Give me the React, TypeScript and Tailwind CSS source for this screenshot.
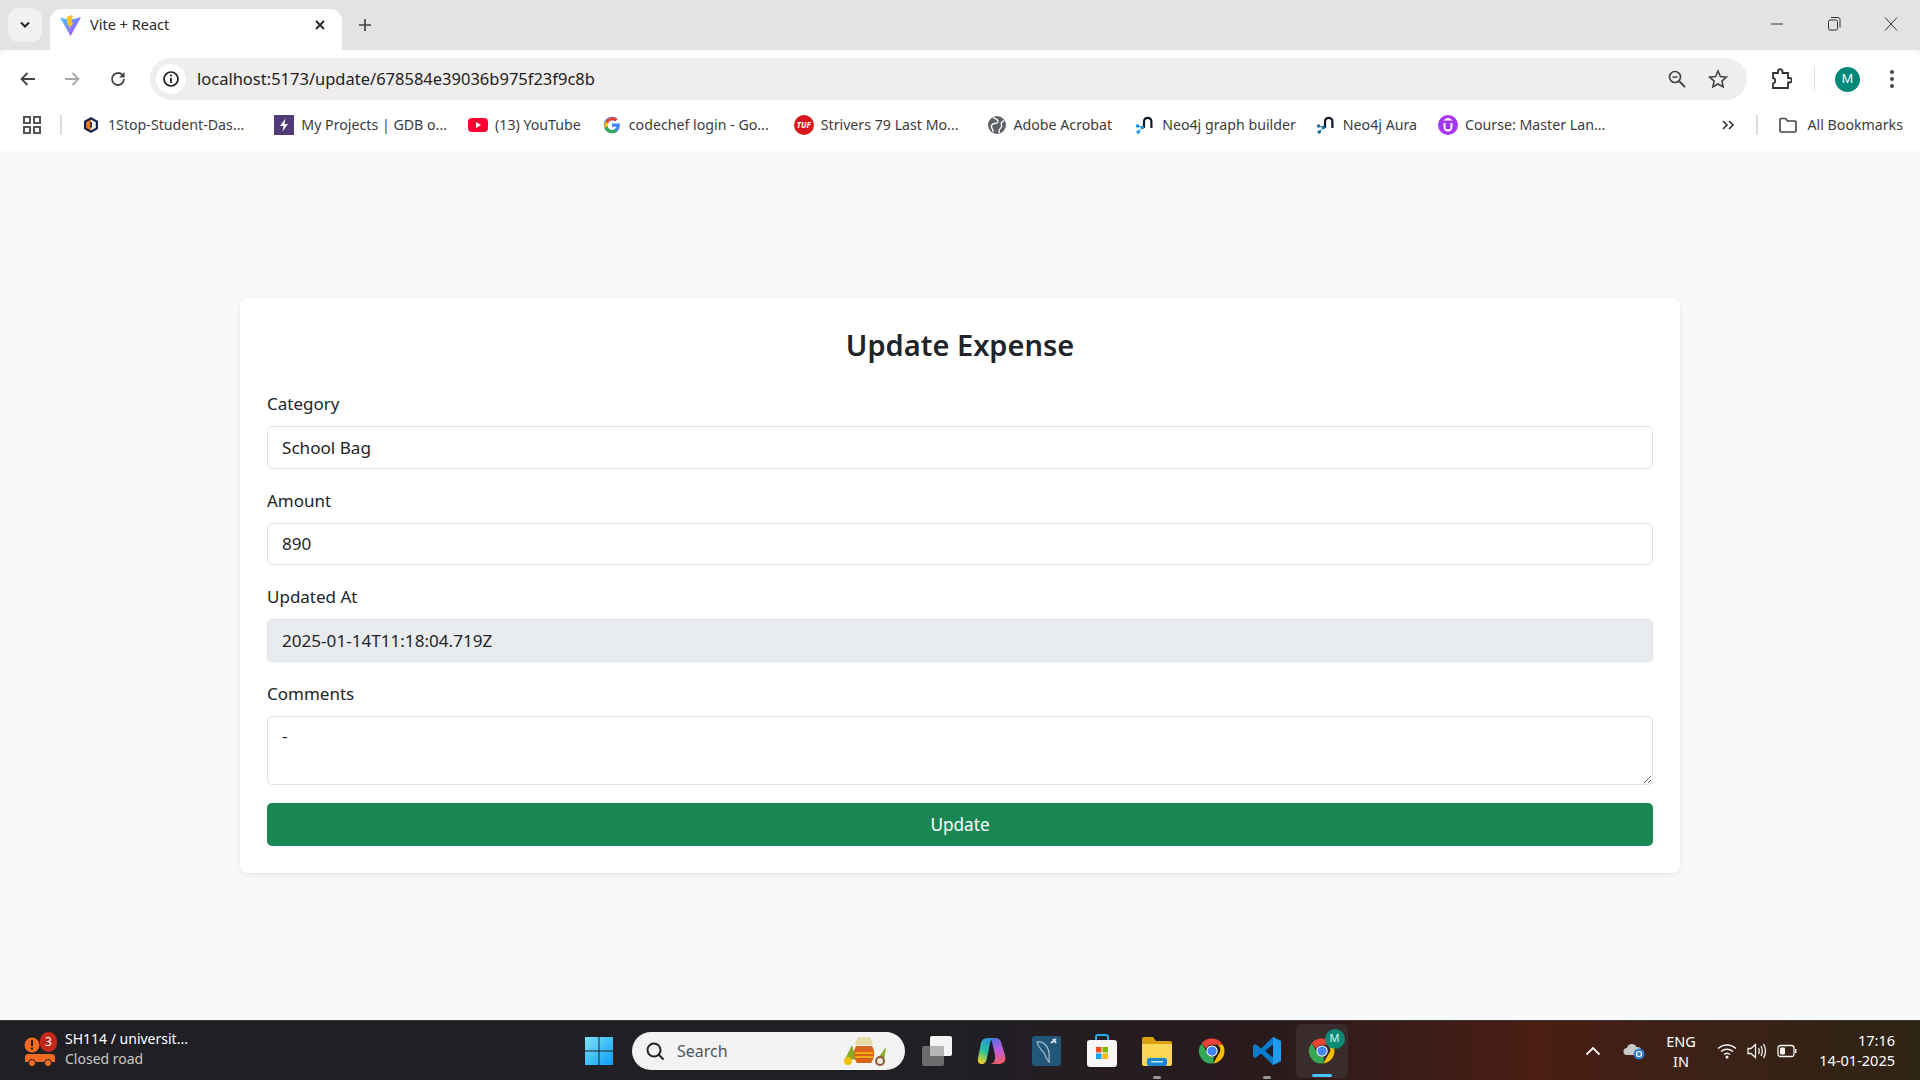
import React from 'react'

const font = { fontFamily: '"Noto Sans", "Open Sans", sans-serif' }

function ViteLogo() {
  return (
    <svg width="23" height="23" viewBox="0 0 24 24">
      <defs>
        <linearGradient id="viteA" x1="0" y1="0" x2="1" y2="1">
          <stop offset="0%" stopColor="#41d1ff" />
          <stop offset="100%" stopColor="#bd34fe" />
        </linearGradient>
      </defs>
      <path d="M1 3.500 L12 23 L23 3.500 L16 5 L12 6 L6 5 Z" fill="url(#viteA)" />
      <path d="M13 1 L8 3 L9 12 L11 11.500 L10.500 16 L15 8.500 L13 9 L14.500 2 Z" fill="#ffc517" />
    </svg>
  )
}

function ChromeLogo({ size = 30 }: { size?: number }) {
  return (
    <svg width={size} height={size} viewBox="0 0 48 48">
      <path d="M24 4a20 20 0 0 1 17.300 10H24a10 10 0 0 0-9.300 6.300L7.600 11.500A20 20 0 0 1 24 4z" fill="#ea4335" />
      <path d="M41.300 14A20 20 0 0 1 26 43.900l8.400-14.600A10 10 0 0 0 33 14z" fill="#fbbc04" />
      <path d="M7.600 11.500l8.700 15.100A10 10 0 0 0 27 33.500L26 43.900A20 20 0 0 1 7.600 11.500z" fill="#34a853" />
      <circle cx="24" cy="24" r="9" fill="#fff" />
      <circle cx="24" cy="24" r="7.400" fill="#4285f4" />
    </svg>
  )
}

function Neo4jIcon({ dark = '#111827', dot = '#1a8fe3' }: { dark?: string; dot?: string }) {
  return (
    <svg width="20" height="20" viewBox="0 0 20 20">
      <path d="M9 13V6.500a3.700 3.700 0 0 1 7.400 0V13" fill="none" stroke={dark} strokeWidth="2.200" />
      <circle cx="2.600" cy="11" r="1.800" fill={dot} />
      <circle cx="7.500" cy="12.500" r="1.800" fill={dot} />
      <circle cx="3.200" cy="17" r="1.800" fill={dot} />
      <path d="M2.600 11 7.500 12.500 3.200 17" fill="none" stroke={dot} strokeWidth="1" />
    </svg>
  )
}

const bookmarks: { label: string; gap: string; icon: React.ReactNode }[] = [
  {
    label: '1Stop-Student-Das...',
    gap: 'mr-[30px]',
    icon: (
      <svg width="18" height="18" viewBox="0 0 18 18">
        <path d="M9 1l7 4v8l-7 4-7-4V5z" fill="#14234f" />
        <path d="M9 3.500l4.800 2.800v5.400L9 14.500z" fill="#f0f0f0" />
        <path d="M9 3.500L4.200 6.300v5.400L9 14.500z" fill="#ee7a1e" />
        <rect x="8.200" y="6" width="1.700" height="5.600" fill="#14234f" />
      </svg>
    ),
  },
  {
    label: 'My Projects | GDB o...',
    gap: 'mr-[21px]',
    icon: (
      <svg width="20" height="20" viewBox="0 0 20 20">
        <rect width="20" height="20" fill="#503a78" />
        <path d="M11.500 3.500 6 11h3.600L8.400 16.500 14 9h-3.600z" fill="#fff" />
      </svg>
    ),
  },
  {
    label: '(13) YouTube',
    gap: 'mr-[21px]',
    icon: (
      <svg width="20" height="20" viewBox="0 0 20 20">
        <rect y="3" width="20" height="14" rx="4" fill="#ff0033" />
        <path d="M8 7l5 3-5 3z" fill="#fff" />
      </svg>
    ),
  },
  {
    label: 'codechef login - Go...',
    gap: 'mr-[25px]',
    icon: (
      <svg width="18" height="18" viewBox="0 0 48 48">
        <path d="M44.500 20H24v8.500h11.800C34.700 33.900 30.100 37 24 37a13 13 0 1 1 0-26c3.300 0 6.200 1.200 8.500 3.200l6.400-6.400A22 22 0 1 0 24 46c11 0 21-8 21-22 0-1.300-.2-2.700-.5-4z" fill="#4285f4" />
        <path d="M6.300 14.700l7 5.100A13 13 0 0 1 24 11c3.300 0 6.200 1.200 8.500 3.200l6.400-6.400A22 22 0 0 0 6.300 14.700z" fill="#ea4335" />
        <path d="M24 46c5.900 0 11-2 14.800-5.400l-6.800-5.600A13 13 0 0 1 11.400 27.500l-7 5.400A22 22 0 0 0 24 46z" fill="#34a853" />
        <path d="M6.300 14.700A22 22 0 0 0 4.400 32.900l7-5.400a13 13 0 0 1 1.900-7.700z" fill="#fbbc04" />
      </svg>
    ),
  },
  {
    label: 'Strivers 79 Last Mo...',
    gap: 'mr-[28px]',
    icon: (
      <span className="flex h-[20px] w-[20px] items-center justify-center rounded-full bg-[#d9161e] text-[8px] font-bold italic text-white">
        TUF
      </span>
    ),
  },
  {
    label: 'Adobe Acrobat',
    gap: 'mr-[23px]',
    icon: (
      <svg width="20" height="20" viewBox="0 0 20 20">
        <circle cx="10" cy="10" r="9" fill="#5f6368" />
        <path d="M6 2.500c2 1 4.500 1.500 5 3.500s-2 2.500-3.500 2.500S4 10 4.500 12s2 3 1.500 5M17 6c-2 .5-3.500 2-2.500 4s-1 3-2 4.500-.5 2.500 0 3.500" fill="none" stroke="#fff" strokeWidth="1.300" />
      </svg>
    ),
  },
  { label: 'Neo4j graph builder', gap: 'mr-[20px]', icon: <Neo4jIcon /> },
  { label: 'Neo4j Aura', gap: 'mr-[21px]', icon: <Neo4jIcon dot="#1a6f9e" /> },
  {
    label: 'Course: Master Lan...',
    gap: 'mr-[0px]',
    icon: (
      <span className="flex h-[20px] w-[20px] items-center justify-center rounded-full bg-[#a435f0]">
        <svg width="12" height="16" viewBox="0 0 12 16">
          <path d="M6 0.500 11 3.500H1z" fill="#fff" />
          <path d="M2.500 6v4a3.500 3.500 0 0 0 7 0V6" fill="none" stroke="#fff" strokeWidth="2" />
        </svg>
      </span>
    ),
  },
]

function TabStrip() {
  return (
    <div className="flex h-[50px] items-end bg-[#e3e3e3]">
      <div className="mb-[8px] ml-[8px] flex h-[34px] w-[34px] items-center justify-center rounded-[10px] bg-[#f1f1f1]">
        <svg width="12" height="8" viewBox="0 0 12 8">
          <path d="M2 1.500l4 4 4-4" fill="none" stroke="#222" strokeWidth="2" />
        </svg>
      </div>
      <div className="ml-[8px] flex h-[41px] w-[292px] items-center rounded-t-[12px] bg-white pb-[9px] pl-[9px] pr-[16px]">
        <ViteLogo />
        <span className="ml-[8px] flex-1 text-[14.5px] text-[#2a2a2a]">Vite + React</span>
        <svg width="12" height="12" viewBox="0 0 12 12">
          <path d="M2 2l8 8M10 2l-8 8" stroke="#222" strokeWidth="1.800" />
        </svg>
      </div>
      <div className="mb-[15px] ml-[13px] flex h-[20px] w-[20px] items-center justify-center">
        <svg width="14" height="14" viewBox="0 0 14 14">
          <path d="M7 1v12M1 7h12" stroke="#444" strokeWidth="1.700" />
        </svg>
      </div>
      <div className="mb-[2px] ml-auto flex h-[48px] items-center gap-[37px] pr-[19px]">
        <svg width="20" height="20" viewBox="0 0 20 20">
          <path d="M4 10h12" stroke="#333" strokeWidth="1" />
        </svg>
        <svg width="20" height="20" viewBox="0 0 20 20">
          <rect x="4.500" y="6" width="9" height="10" rx="1.500" fill="none" stroke="#333" />
          <path d="M7 3.500h7a2 2 0 0 1 2 2v8" fill="none" stroke="#333" />
        </svg>
        <svg width="20" height="20" viewBox="0 0 20 20">
          <path d="M4 3.500l12 13M16 3.500l-12 13" stroke="#333" strokeWidth="1" />
        </svg>
      </div>
    </div>
  )
}

function Toolbar() {
  return (
    <div className="flex h-[51px] items-center rounded-t-[10px] bg-white pt-[7px]">
      <div className="flex w-[150px] items-center pl-[18px]">
        <svg width="20" height="20" viewBox="0 0 20 20">
          <path d="M17 10H4M9.500 4 3.500 10l6 6" fill="none" stroke="#444" strokeWidth="1.800" />
        </svg>
        <svg className="ml-[24px]" width="20" height="20" viewBox="0 0 20 20">
          <path d="M3 10h13M10.500 4l6 6-6 6" fill="none" stroke="#a8a8a8" strokeWidth="1.800" />
        </svg>
        <svg className="ml-[26px]" width="20" height="20" viewBox="0 0 20 20">
          <path d="M16 10a6 6 0 1 1-1.800-4.300L16 7.500" fill="none" stroke="#444" strokeWidth="1.800" />
          <path d="M16.500 3v5.500H11z" fill="#444" />
        </svg>
      </div>
      <div className="flex h-[42px] w-[1597px] items-center rounded-full bg-[#efedee] pl-[6px] pr-[19px]">
        <span className="flex h-[30px] w-[30px] items-center justify-center rounded-full bg-white">
          <svg width="18" height="18" viewBox="0 0 18 18">
            <circle cx="9" cy="9" r="7" fill="none" stroke="#222" strokeWidth="1.700" />
            <path d="M9 8v5" stroke="#222" strokeWidth="1.800" />
            <circle cx="9" cy="5.500" r="1.100" fill="#222" />
          </svg>
        </span>
        <span className="ml-[11px] flex-1 text-[16.5px] text-[#222]">localhost:5173/update/678584e39036b975f23f9c8b</span>
        <svg width="20" height="20" viewBox="0 0 20 20">
          <circle cx="8" cy="8" r="5.500" fill="none" stroke="#444" strokeWidth="1.700" />
          <path d="M12 12l6 6" stroke="#444" strokeWidth="1.800" />
          <path d="M5.500 8h5" stroke="#444" strokeWidth="1.500" />
        </svg>
        <svg className="ml-[21px]" width="20" height="20" viewBox="0 0 20 20">
          <path d="M10 2l2.400 5.500 6 .6-4.500 4 1.300 5.900L10 15l-5.200 3 1.300-5.900-4.500-4 6-.6z" fill="none" stroke="#444" strokeWidth="1.600" />
        </svg>
      </div>
      <svg className="ml-[23px]" width="22" height="22" viewBox="0 0 22 22">
        <path d="M3 5h5V3.500a2.200 2.200 0 0 1 4.500 0V5H18v5h1.500a2 2 0 0 1 0 4.500H18V20H3v-4.500a2.300 2.300 0 0 0 2-3 2.300 2.300 0 0 0-2-2.500z" fill="none" stroke="#333" strokeWidth="1.800" />
      </svg>
      <div className="ml-[22px] h-[24px] w-[1px] bg-[#e0e0e0]" />
      <div className="ml-[20px] flex h-[25px] w-[25px] items-center justify-center rounded-full bg-[#00897b] text-[13px] text-white">
        M
      </div>
      <div className="ml-[30px] flex flex-col gap-[3px]">
        <span className="h-[4px] w-[4px] rounded-full bg-[#444]" />
        <span className="h-[4px] w-[4px] rounded-full bg-[#444]" />
        <span className="h-[4px] w-[4px] rounded-full bg-[#444]" />
      </div>
    </div>
  )
}

function BookmarksBar() {
  return (
    <div className="flex h-[50px] items-center bg-white pb-[2px] text-[14.2px] text-[#3c3c3c]">
      <div className="flex items-center pl-[22px]">
        <svg width="20" height="20" viewBox="0 0 20 20">
          <g fill="none" stroke="#555" strokeWidth="2">
            <rect x="2" y="2" width="6" height="6" />
            <rect x="12" y="2" width="6" height="6" />
            <rect x="2" y="12" width="6" height="6" />
            <rect x="12" y="12" width="6" height="6" />
          </g>
        </svg>
        <div className="ml-[18px] h-[20px] w-[2px] bg-[#dcdcdc]" />
      </div>
      <div className="ml-[19px] flex items-center">
        {bookmarks.map((b) => (
          <div key={b.label} className={`flex items-center gap-[7px] whitespace-nowrap ${b.gap}`}>
            <span className="flex h-[20px] w-[20px] items-center justify-center">{b.icon}</span>
            <span>{b.label}</span>
          </div>
        ))}
      </div>
      <div className="ml-auto flex items-center pr-[17px]">
        <svg width="16" height="14" viewBox="0 0 16 14">
          <path d="M3 3l4 4-4 4M9 3l4 4-4 4" fill="none" stroke="#333" strokeWidth="1.600" />
        </svg>
        <div className="mx-[20px] h-[20px] w-[2px] bg-[#dcdcdc]" />
        <svg width="20" height="18" viewBox="0 0 20 18">
          <path d="M2 3.500a1 1 0 0 1 1-1h4.500l2 2.500H17a1 1 0 0 1 1 1V15a1 1 0 0 1-1 1H3a1 1 0 0 1-1-1z" fill="none" stroke="#444" strokeWidth="1.600" />
        </svg>
        <span className="ml-[10px]">All Bookmarks</span>
      </div>
    </div>
  )
}

function Field({ label, value, disabled }: { label: string; value: string; disabled?: boolean }) {
  return (
    <div className="mb-[19px]">
      <label className="mb-[11px] block h-[24px] text-[17px] leading-[26px] text-[#212529]">{label}</label>
      <input
        readOnly
        value={value}
        disabled={disabled}
        className={
          disabled
            ? 'block h-[42.5px] w-full rounded-[5px] border border-[#dee2e6] bg-[#e9ecef] px-[14px] text-[17.1px] text-[#212529] outline-none'
            : 'block h-[42.5px] w-full rounded-[5px] border border-[#dee2e6] bg-white px-[14px] text-[17.1px] text-[#212529] outline-none'
        }
      />
    </div>
  )
}

function UpdateForm() {
  return (
    <div className="mx-auto mt-[147px] w-[1440px] rounded-[8px] bg-white px-[27px] pb-[27px] pt-[25px] shadow-[0_2px_6px_rgba(0,0,0,0.08)]">
      <h2 className="mb-[24px] text-center text-[29px] font-semibold leading-[44px] text-[#212529]">Update Expense</h2>
      <Field label="Category" value="School Bag" />
      <Field label="Amount" value="890" />
      <Field label="Updated At" value="2025-01-14T11:18:04.719Z" disabled />
      <div className="mb-[18px]">
        <label className="mb-[11px] block h-[24px] text-[17px] leading-[26px] text-[#212529]">Comments</label>
        <textarea
          readOnly
          defaultValue="-"
          className="block h-[69px] w-full rounded-[5px] border border-[#dee2e6] bg-white px-[14px] py-[6px] text-[17.1px] text-[#212529] outline-none"
        />
      </div>
      <button className="block h-[43px] w-full rounded-[5px] bg-[#198754] pt-[1px] text-[17.2px] text-white">Update</button>
    </div>
  )
}

function Taskbar() {
  return (
    <div className="flex h-[60px] items-center border-t border-[#3a3638] bg-[linear-gradient(90deg,#201f24_0%,#201f24_50%,#2a1a1c_66%,#4a1e14_80%,#3a2216_90%,#2e2414_100%)] text-white">
      <div className="flex w-[584px] items-center pl-[24px]">
        <div className="relative h-[40px] w-[40px]">
          <svg className="absolute left-0 top-[2px]" width="34" height="36" viewBox="0 0 34 36">
            <circle cx="8" cy="12" r="7.500" fill="#f26a21" />
            <rect x="7" y="7" width="2" height="6" fill="#2a1a14" />
            <rect x="7" y="14.500" width="2" height="2" fill="#2a1a14" />
            <path d="M1 24q0-3 3-3h24q3 0 3 3v5H1z" fill="#f26a21" />
            <circle cx="8" cy="30" r="3.500" fill="#f26a21" stroke="#1f2027" />
            <circle cx="24" cy="30" r="3.500" fill="#f26a21" stroke="#1f2027" />
          </svg>
          <span className="absolute left-[16px] top-[1px] flex h-[20px] w-[17px] items-center justify-center rounded-full bg-[#c4281c] text-[12px]">
            3
          </span>
        </div>
        <div className="ml-[1px] mb-[4px] text-[14px] leading-[20px]">
          <div>SH114 / universit...</div>
          <div className="text-[#c9c9c9]">Closed road</div>
        </div>
      </div>
      <svg width="30" height="30" viewBox="0 0 30 30">
        <defs>
          <linearGradient id="winA" x1="0" y1="0" x2="1" y2="1">
            <stop offset="0%" stopColor="#7de3fb" />
            <stop offset="100%" stopColor="#0a9cf5" />
          </linearGradient>
        </defs>
        <path d="M1 1h13.500v13.500H1zM15.500 1H29v13.500H15.500zM1 15.500h13.500V29H1zM15.500 15.500H29V29H15.500z" fill="url(#winA)" />
      </svg>
      <div className="ml-[18px] flex h-[38px] w-[273px] items-center rounded-full bg-[#f3f3f3] pl-[13px] pr-[15px] text-[#555]">
        <svg width="20" height="20" viewBox="0 0 20 20">
          <circle cx="9" cy="9" r="6.500" fill="none" stroke="#222" strokeWidth="2" />
          <path d="M13.500 13.500l5 5" stroke="#222" strokeWidth="2" />
        </svg>
        <span className="ml-[12px] flex-1 text-[16px]">Search</span>
        <svg width="50" height="32" viewBox="0 0 50 32">
          <path d="M4 26l8-16 4 14z" fill="#8aa82a" />
          <path d="M36 26l10-14-2 14z" fill="#8aa82a" />
          <circle cx="8" cy="26" r="4" fill="#f4c20d" />
          <path d="M18 2h12l3 8H15z" fill="#ead9a8" />
          <path d="M16 11h16q5 8-1 17H17q-6-9-1-17z" fill="#d9621a" />
          <path d="M15 18h18M15 22h18" stroke="#f4c20d" strokeWidth="1.500" />
          <circle cx="40" cy="26" r="5" fill="#8a5a3c" />
          <circle cx="40" cy="26" r="3" fill="#efe6d8" />
        </svg>
      </div>
      <div className="ml-[4px] flex items-center">
        <div className="flex h-[48px] w-[55px] items-center justify-center">
          <div className="relative h-[30px] w-[30px]">
            <div className="absolute bottom-0 left-0 h-[20px] w-[22px] rounded-[2px] bg-[#6b6b6b]" />
            <div className="absolute right-0 top-0 h-[20px] w-[22px] rounded-[2px] bg-[#f4f4f4]" />
            <div className="absolute bottom-[10px] left-[8px] h-[10px] w-[14px] bg-[#b5b5b5]" />
          </div>
        </div>
        <div className="flex h-[48px] w-[55px] items-center justify-center">
          <svg width="30" height="32" viewBox="0 0 30 32">
            <defs>
              <linearGradient id="copA" x1="0.700" y1="0" x2="0.300" y2="1">
                <stop offset="0%" stopColor="#2f8fe0" />
                <stop offset="55%" stopColor="#25c2a0" />
                <stop offset="100%" stopColor="#f5d020" />
              </linearGradient>
              <linearGradient id="copB" x1="0.400" y1="0" x2="0.600" y2="1">
                <stop offset="0%" stopColor="#5a6fe8" />
                <stop offset="50%" stopColor="#c45cd8" />
                <stop offset="100%" stopColor="#f0605c" />
              </linearGradient>
            </defs>
            <path d="M18 3q5 0 6 4l4 13q2 8-5 9h-9q5-2 4-9l-3-13q-1-4 3-4z" fill="url(#copB)" />
            <path d="M11 3h7q-4 1-5 5l-3 15q-1 6-5 6-5 0-4-6l3-15q1-5 7-5z" fill="url(#copA)" />
          </svg>
        </div>
        <div className="flex h-[48px] w-[55px] items-center justify-center">
          <svg width="29" height="30" viewBox="0 0 29 30">
            <rect width="29" height="30" rx="3" fill="#22577a" />
            <path d="M5 6c5-1 9 2 11 7s1 10 1 13c-3-3-3-6-5-9s-6-5-7-11z" fill="none" stroke="#a9bfce" strokeWidth="1.200" />
            <path d="M19 7l5-4M21 3l3 4" stroke="#d5dfe6" strokeWidth="1.800" />
          </svg>
        </div>
        <div className="flex h-[48px] w-[55px] items-center justify-center">
          <svg width="30" height="34" viewBox="0 0 30 34">
            <path d="M9 7V3q0-2 2-2h8q2 0 2 2v4" fill="none" stroke="#29a8ea" strokeWidth="2" />
            <rect y="6" width="30" height="27" rx="3" fill="#f7f7f7" />
            <rect x="9" y="13" width="5.500" height="5.500" fill="#f25022" />
            <rect x="15.500" y="13" width="5.500" height="5.500" fill="#7fba00" />
            <rect x="9" y="19.500" width="5.500" height="5.500" fill="#00a4ef" />
            <rect x="15.500" y="19.500" width="5.500" height="5.500" fill="#ffb900" />
          </svg>
        </div>
        <div className="relative flex h-[48px] w-[55px] items-center justify-center">
          <svg width="30" height="30" viewBox="0 0 30 30">
            <path d="M0 3q0-2 2-2h9l3 4h14q2 0 2 2v3H0z" fill="#d9a012" />
            <path d="M0 8h30v20q0 2-2 2H2q-2 0-2-2z" fill="#fcd757" />
            <rect x="5" y="22" width="20" height="8" rx="2" fill="#1a86d0" />
            <rect x="9" y="25" width="12" height="1.500" fill="#bfe3f7" />
          </svg>
          <span className="absolute bottom-[-4px] h-[3px] w-[8px] rounded-full bg-[#9a9a9a]" />
        </div>
        <div className="flex h-[48px] w-[55px] items-center justify-center">
          <ChromeLogo />
        </div>
        <div className="relative flex h-[48px] w-[55px] items-center justify-center">
          <svg width="30" height="30" viewBox="0 0 30 30">
            <path d="M21 1l8 4v20l-8 4L9 17.500 3.500 22 1 20.500v-11L3.500 8 9 12.500z" fill="#0a7ccc" />
            <path d="M21 8.500 13 15l8 6.500z" fill="#1f2027" />
            <path d="M21 1l8 4v20l-8 4z" fill="#1f9cf0" />
          </svg>
          <span className="absolute bottom-[-4px] h-[3px] w-[8px] rounded-full bg-[#9a9a9a]" />
        </div>
        <div className="relative ml-[1.5px] flex h-[54px] w-[52px] items-center justify-center rounded-[5px] bg-[#3a2c2c]">
          <ChromeLogo />
          <span className="absolute right-[3px] top-[5px] flex h-[20px] w-[20px] items-center justify-center rounded-full bg-[#0f8a76] text-[11px] text-[#cfe]">
            M
          </span>
          <span className="absolute bottom-[1px] h-[3px] w-[20px] rounded-full bg-[#4cc2ff]" />
        </div>
      </div>
      <div className="ml-auto flex items-center pr-[25px]">
        <svg width="16" height="10" viewBox="0 0 16 10">
          <path d="M1.500 8.500 8 2l6.500 6.500" fill="none" stroke="#f2f2f2" strokeWidth="1.800" />
        </svg>
        <svg className="ml-[22px]" width="22" height="18" viewBox="0 0 22 18">
          <path d="M4 13a3.500 3.500 0 0 1 0-7 5 5 0 0 1 9.500-1A4 4 0 0 1 15 13z" fill="#c9c9c9" />
          <circle cx="16" cy="12" r="5.500" fill="#2f80d8" />
          <circle cx="16" cy="12" r="2.500" fill="none" stroke="#fff" strokeWidth="1.200" />
        </svg>
        <div className="ml-[16px] w-[40px] text-center text-[14.5px] leading-[20px]">
          <div>ENG</div>
          <div>IN</div>
        </div>
        <svg className="ml-[16px]" width="20" height="16" viewBox="0 0 20 16">
          <path d="M1 5.500a13 13 0 0 1 18 0M4 8.500a9 9 0 0 1 12 0M7 11.500a4.500 4.500 0 0 1 6 0" fill="none" stroke="#f2f2f2" strokeWidth="1.500" />
          <circle cx="10" cy="14" r="1.500" fill="#f2f2f2" />
        </svg>
        <svg className="ml-[10px]" width="20" height="18" viewBox="0 0 20 18">
          <path d="M1 6.500h3L8.500 2.500v13L4 11.500H1z" fill="none" stroke="#f2f2f2" strokeWidth="1.300" />
          <path d="M11.500 6q1.500 3 0 6M14 4q2.500 5 0 10M16.500 2q4 7 0 14" fill="none" stroke="#f2f2f2" strokeWidth="1.300" />
        </svg>
        <svg className="ml-[10px]" width="20" height="14" viewBox="0 0 20 14">
          <rect x="1" y="1.500" width="16" height="11" rx="2.500" fill="none" stroke="#f2f2f2" strokeWidth="1.300" />
          <rect x="3" y="3.500" width="5" height="7" rx="1" fill="#f2f2f2" />
          <rect x="18" y="5" width="1.500" height="4" fill="#f2f2f2" />
        </svg>
        <div className="ml-[20px] mb-[2px] w-[78px] text-right text-[14.5px] leading-[20px]">
          <div>17:16</div>
          <div>14-01-2025</div>
        </div>
      </div>
    </div>
  )
}

export default function App() {
  return (
    <div className="flex h-[1080px] w-[1920px] flex-col overflow-hidden bg-[#f8f9fa]" style={font}>
      <TabStrip />
      <Toolbar />
      <BookmarksBar />
      <main className="flex-1">
        <UpdateForm />
      </main>
      <Taskbar />
    </div>
  )
}
